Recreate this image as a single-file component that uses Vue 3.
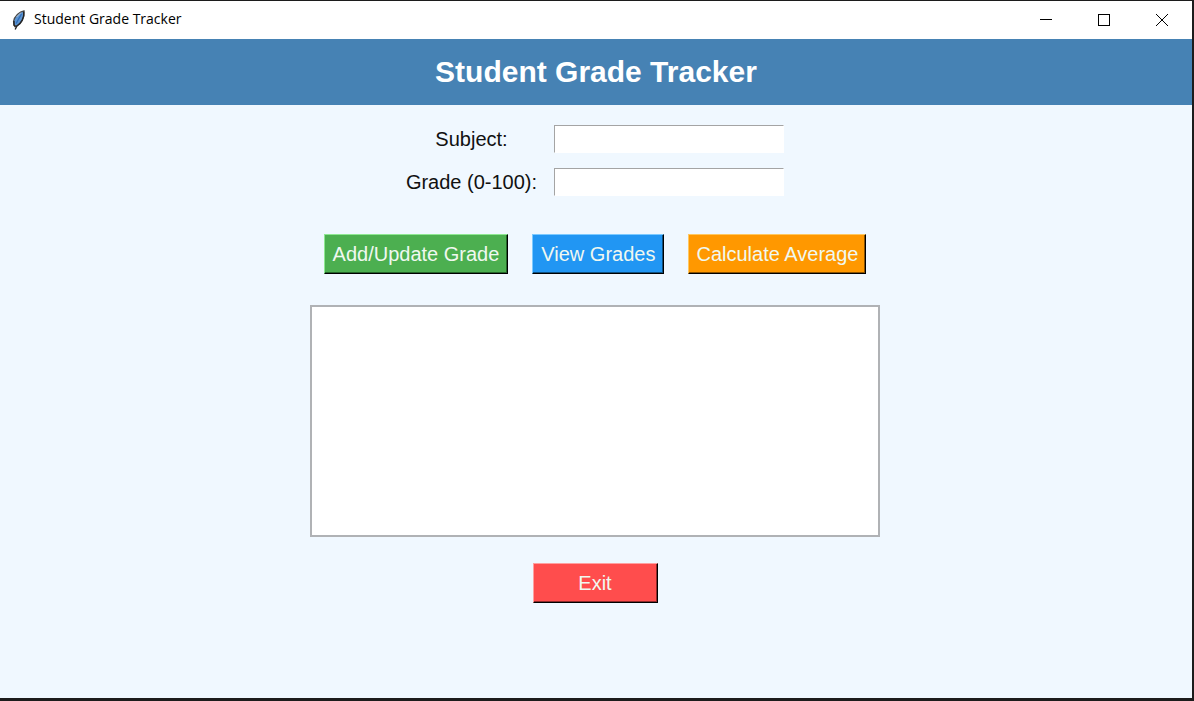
<script setup>
import { ref } from 'vue'

const subject = ref('')
const grade = ref('')
const output = ref('')
</script>

<template>
  <div class="window">
    <header class="titlebar">
      <svg class="feather" viewBox="0 0 14 20" aria-hidden="true">
        <path d="M12 .8C7.500 1.500 2.300 6.500 1.500 11.500L2.200 15.500 4.800 16.200C9 14 13 8 12 .8Z" fill="#5b94d2" stroke="#4a4a4a" stroke-width="1.200" />
        <path d="M11.800 1.500C12.500 8 9 13.500 4.800 16L3.200 19.500" fill="none" stroke="#242424" stroke-width="1.400" />
        <path d="M2 11V15L3.500 17" fill="none" stroke="#242424" stroke-width="1.400" />
        <path d="M9.500 4C8 7 6 9.500 4.200 13.500" fill="none" stroke="#2f6cb8" stroke-width="1.200" />
        <path d="M9 2.500L4.500 7" stroke="#b4c4d4" stroke-width="1" />
      </svg>
      <span class="caption">Student Grade Tracker</span>
      <div class="controls">
        <button class="control" type="button" aria-label="Minimize">
          <svg viewBox="0 0 14 14" shape-rendering="crispEdges"><path d="M1 6.500H13" /></svg>
        </button>
        <button class="control" type="button" aria-label="Maximize">
          <svg viewBox="0 0 14 14" shape-rendering="crispEdges"><path d="M1.500 1.500H12.500V12.500H1.500Z" /></svg>
        </button>
        <button class="control" type="button" aria-label="Close">
          <svg viewBox="0 0 14 14"><path d="M1 1L13 13M13 1L1 13" /></svg>
        </button>
      </div>
    </header>

    <h1 class="banner">Student Grade Tracker</h1>

    <main class="content">
      <form class="fields" @submit.prevent>
        <label for="subject">Subject:</label>
        <input id="subject" v-model="subject" type="text" />
        <label for="grade">Grade (0-100):</label>
        <input id="grade" v-model="grade" type="text" />
      </form>

      <div class="actions">
        <button class="action add" type="button">Add/Update Grade</button>
        <button class="action view" type="button">View Grades</button>
        <button class="action average" type="button">Calculate Average</button>
      </div>

      <textarea v-model="output" class="output" aria-label="Grades"></textarea>

      <button class="action exit" type="button">Exit</button>
    </main>
  </div>
</template>

<style>
body {
  margin: 0;
  background: #1c1c1c;
}
</style>

<style scoped>
.window {
  box-sizing: border-box;
  min-height: 100vh;
  display: flex;
  flex-direction: column;
  border: solid #1c1c1c;
  border-width: 1px 2px 3px 0;
  background: #f0f8ff;
  font-family: "Liberation Sans", Arial, sans-serif;
  font-size: 20px;
  color: #111;
}

.titlebar {
  display: flex;
  align-items: center;
  height: 38px;
  padding: 0 1px 0 12px;
  background: #fff;
}

.feather {
  width: 14px;
  height: 20px;
  margin-right: 8px;
}

.caption {
  font-family: "Open Sans", "Noto Sans", sans-serif;
  font-size: 14px;
  line-height: 18px;
  padding-bottom: 2px;
  color: #000;
}

.controls {
  display: flex;
  align-self: stretch;
  margin-left: auto;
}

.control {
  display: flex;
  align-items: center;
  justify-content: center;
  width: 58px;
  padding: 0;
  border: 0;
  background: none;
}

.control svg {
  width: 14px;
  height: 14px;
  fill: none;
  stroke: #000;
}

.banner {
  margin: 0;
  padding: 15px 0;
  background: #4682b4;
  color: #fff;
  font-size: 30px;
  line-height: 36px;
  text-align: center;
}

.content {
  display: flex;
  flex-direction: column;
  align-items: center;
  padding: 20px 2px 20px 0;
}

.fields {
  display: grid;
  grid-template-columns: auto auto;
  align-items: center;
  justify-items: center;
  gap: 15px 17px;
}

.fields input {
  box-sizing: border-box;
  width: 230px;
  height: 28px;
  padding: 2px;
  border: 1px solid #fff;
  border-top-color: #a4a4a4;
  border-left-color: #a4a4a4;
  background: #fff;
  font: inherit;
}

.actions {
  display: flex;
  gap: 24px;
  margin-top: 38px;
}

.action {
  box-sizing: border-box;
  height: 40px;
  padding: 0 8px;
  border: 1px solid;
  color: #f0f8f0;
  font: inherit;
}

.add {
  background: #4caf50;
  border-color: #8ee892 #000 #000 #8ee892;
  box-shadow: inset -1px -1px #26652a;
}

.view {
  background: #2196f3;
  border-color: #7ccaff #000 #000 #7ccaff;
  box-shadow: inset -1px -1px #10507f;
}

.average {
  padding: 0 7px;
  background: #ff9800;
  border-color: #ffc860 #000 #000 #ffc860;
  box-shadow: inset -1px -1px #8a5200;
}

.output {
  box-sizing: border-box;
  width: 570px;
  height: 232px;
  margin-top: 31px;
  padding: 4px;
  border: 2px solid #b0b2b5;
  background: #fff;
  font: inherit;
  resize: none;
}

.exit {
  width: 125px;
  margin-top: 26px;
  background: #ff4d4d;
  border-color: #ffa0a0 #000 #000 #ffa0a0;
  box-shadow: inset -1px -1px #8f2a2a;
}
</style>
